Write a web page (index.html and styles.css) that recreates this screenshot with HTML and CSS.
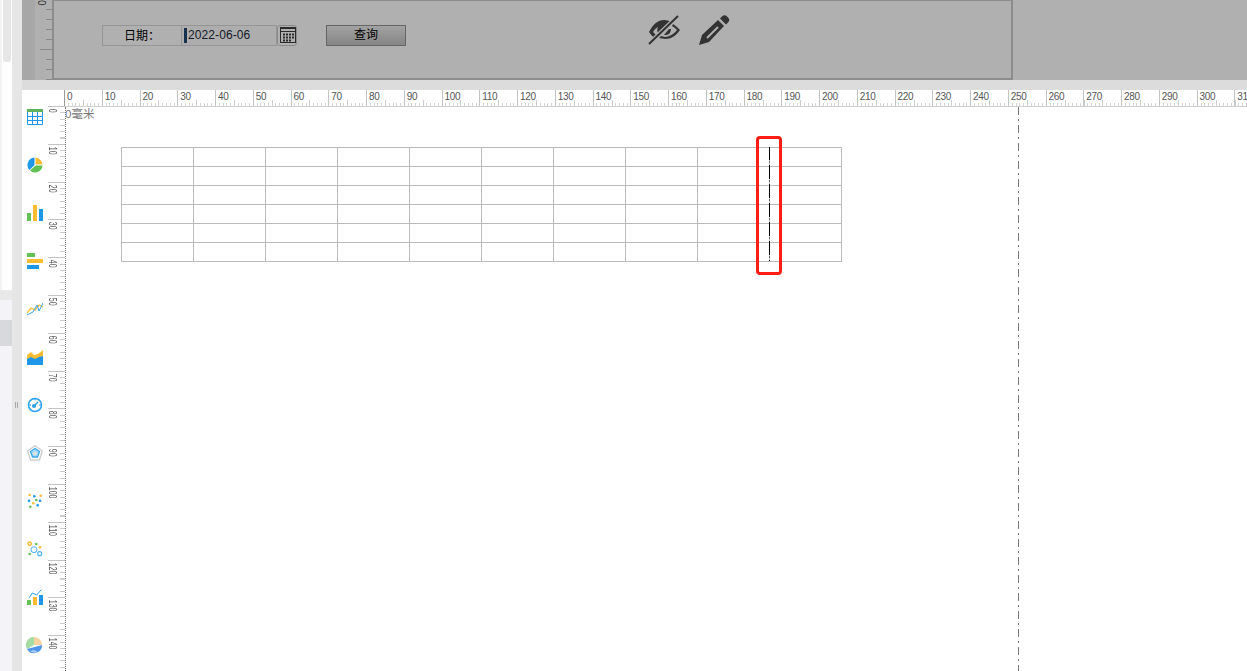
FILE: index.html
```html
<!DOCTYPE html>
<html lang="zh-CN">
<head>
    <meta charset="UTF-8">
    <title>报表设计器</title>
    <link rel="stylesheet" href="styles.css">
</head>
<body>
    <div class="app">
        <div class="nav">
            <div class="nav-top"><div class="nav-thumb"></div></div>
            <div class="nav-rule"></div>
            <div class="nav-item"></div>
            <div class="nav-item active"></div>
            <div class="nav-rest"></div>
        </div>
        <div class="splitter"><div class="grip"></div></div>

        <div class="work">
            <!-- 预览区（蒙层状态） -->
            <div class="preview">
                <div class="preview-gutter"></div>
                <div class="preview-ruler"><span>0</span></div>
                <div class="preview-canvas">
                    <div class="field-label">日期：</div>
                    <div class="field-input"><i class="caret"></i>2022-06-06</div>
                    <div class="field-cal">
                        <svg width="16" height="16" viewBox="0 0 16 16">
                            <rect x="0.5" y="0.5" width="15" height="15" fill="#b0b0b0" stroke="#2b2b2b"/>
                            <rect x="0" y="0" width="16" height="2" fill="#2b2b2b"/>
                            <rect x="0" y="4" width="16" height="1" fill="#2b2b2b"/>
                            <path d="M3 6.500h2v2H3zM6 6.500h2v2H6zM9 6.500h2v2H9zM12 6.500h2v2h-2zM3 9.500h2v2H3zM6 9.500h2v2H6zM9 9.500h2v2H9zM12 9.500h2v2h-2zM3 12.500h2v2H3zM6 12.500h2v2H6zM9 12.500h2v2H9z" fill="#2b2b2b"/>
                        </svg>
                    </div>
                    <div class="query-btn">查询</div>
                    <svg class="icon-eye" width="32" height="30" viewBox="0 0 32 30">
                        <path d="M1 17C5 9 10 5 16 5c3 0 6 1 8 2L8 24C5 22 3 20 1 17z" fill="#333"/>
                        <path d="M5 17c1-2 3-4 5-5-1 2-1 4 0 6l-2 2c-1-1-2-2-3-3z" fill="#b0b0b0"/>
                        <path d="M25 9c3 2 5 4 7 6-4 6-9 9-15 9-2 0-4-1-6-1l2-2c1 0 3 1 4 1 4 0 9-3 12-7-1-1-3-3-5-4z" fill="#333"/>
                        <path d="M18 20c3 0 5-3 5-6l-2 0-5 6z" fill="#333"/>
                        <path d="M1 29L30 1" stroke="#b0b0b0" stroke-width="4.5"/>
                        <path d="M1 29L30 1" stroke="#333" stroke-width="2"/>
                    </svg>
                    <svg class="icon-pencil" width="32" height="30" viewBox="0 0 32 30">
                        <path d="M0 30l3-10L19 5l6 6L10 27z" fill="#333"/>
                        <path d="M21 3.500L23 1.500a3.500 3.500 0 0 1 5 0l1 1a3.500 3.500 0 0 1 0 5L27 9.500z" fill="#333"/>
                        <path d="M8 23L19 12" stroke="#b0b0b0" stroke-width="2"/>
                    </svg>
                </div>
            </div>
            <div class="band"></div>

            <!-- 设计区 -->
            <div class="designer">
                <div class="palette">
                    <div class="tool">
                        <svg width="16" height="16" viewBox="0 0 16 16">
                            <rect width="16" height="3" fill="#5fb35b"/>
                            <path d="M.5 3v12.500h15V3M5.500 3v12.500M10.500 3v12.500M0 7.500h16M0 11.500h16" fill="none" stroke="#1f97e6"/>
                        </svg>
                    </div>
                    <div class="tool">
                        <svg width="16" height="16" viewBox="0 0 16 16">
                            <path d="M8.500 .5a7.500 7.500 0 0 1 7 7H8.500z" fill="#fbbc34"/>
                            <path d="M15.500 8.500a7.500 7.500 0 0 1-12.500 5L8.500 8.500z" fill="#62c254"/>
                            <path d="M7.500 .5v7.500l-5 5a7.500 7.500 0 0 1 5-12.500z" fill="#1f97e6"/>
                        </svg>
                    </div>
                    <div class="tool">
                        <svg width="16" height="16" viewBox="0 0 16 16">
                            <rect x="0" y="8" width="4" height="8" fill="#62c254"/>
                            <rect x="6" y="0" width="4" height="16" fill="#fbbc34"/>
                            <rect x="12" y="4" width="4" height="12" fill="#1f97e6"/>
                        </svg>
                    </div>
                    <div class="tool">
                        <svg width="16" height="16" viewBox="0 0 16 16">
                            <rect x="0" y="0" width="8" height="4" fill="#62c254"/>
                            <rect x="0" y="6" width="16" height="4" fill="#fbbc34"/>
                            <rect x="0" y="12" width="12" height="4" fill="#1f97e6"/>
                        </svg>
                    </div>
                    <div class="tool">
                        <svg width="16" height="16" viewBox="0 0 16 16" fill="none">
                            <path d="M0 12L4 7l4 2 4-5 4 2" stroke="#fbbc34" stroke-width="1.300"/>
                            <path d="M0 14l6-3 4-7 2 6 4-8" stroke="#3aa4ec"/>
                        </svg>
                    </div>
                    <div class="tool">
                        <svg width="16" height="16" viewBox="0 0 16 16">
                            <path d="M0 6l4-3 3 3 4-1 5-4v15H0z" fill="#fbbc34"/>
                            <path d="M0 10l4-2 4 2 4-2 4-1v9H0z" fill="#1f97e6"/>
                        </svg>
                    </div>
                    <div class="tool">
                        <svg width="16" height="16" viewBox="0 0 16 16" fill="none">
                            <circle cx="8" cy="8" r="6.500" stroke="#2a9fec" stroke-width="1.500"/>
                            <path d="M8 1.500v2M2 8h2M12 8h2" stroke="#2a9fec"/>
                            <circle cx="7" cy="9" r="2" fill="#2a9fec"/>
                            <path d="M7 9l4-4" stroke="#2a9fec" stroke-width="1.500"/>
                        </svg>
                    </div>
                    <div class="tool">
                        <svg width="16" height="16" viewBox="0 0 16 16" fill="none">
                            <path d="M8 .7l7.300 5.300-2.800 9h-9L.7 6z" stroke="#cfcfcf" stroke-width="1.400"/>
                            <path d="M8 3.500l4.500 3-2 5.500h-5l-2-5.500z" fill="#a9dcf8" stroke="#3ba8ec" stroke-width="1.300"/>
                            <path d="M8 6.500l2 1.500-1 2H7L6 8z" fill="#e4e4e4"/>
                        </svg>
                    </div>
                    <div class="tool">
                        <svg width="16" height="16" viewBox="0 0 16 16">
                            <circle cx="2.700" cy="2" r="1.300" fill="#fbbc34"/>
                            <circle cx="7.300" cy="3.300" r="1.300" fill="#1f97e6"/>
                            <circle cx="13.700" cy="2.700" r="1.300" fill="#fbbc34"/>
                            <circle cx="2" cy="7.700" r="1.300" fill="#1f97e6"/>
                            <circle cx="9.300" cy="7" r="1.300" fill="#62c254"/>
                            <circle cx="13" cy="7.700" r="1.300" fill="#1f97e6"/>
                            <circle cx="6.300" cy="10.300" r="1.300" fill="#fbbc34"/>
                            <circle cx="3.300" cy="13.700" r="1.300" fill="#62c254"/>
                            <circle cx="10.700" cy="12.300" r="1.300" fill="#1f97e6"/>
                        </svg>
                    </div>
                    <div class="tool">
                        <svg width="16" height="16" viewBox="0 0 16 16" fill="none">
                            <circle cx="2.700" cy="2.700" r="1.700" stroke="#fbbc34" stroke-width="1.500"/>
                            <circle cx="9.300" cy="3" r="1.300" fill="#62c254"/>
                            <circle cx="13" cy="6.300" r="1.300" fill="#fbbc34"/>
                            <circle cx="7" cy="8.700" r="3" stroke="#4db1ee"/>
                            <circle cx="12.700" cy="12.700" r="2" stroke="#4db1ee" stroke-width="1.200"/>
                            <circle cx="2.700" cy="13" r="1.300" fill="#62c254"/>
                        </svg>
                    </div>
                    <div class="tool">
                        <svg width="16" height="16" viewBox="0 0 16 16">
                            <rect x="0" y="11" width="4" height="5" fill="#62c254"/>
                            <rect x="6" y="8" width="4" height="8" fill="#fbbc34"/>
                            <rect x="12" y="6" width="4" height="10" fill="#1f97e6"/>
                            <path d="M2.300 8.700L5.300 4l4.400 2 4.600-5.300" fill="none" stroke="#2a9fec"/>
                        </svg>
                    </div>
                    <div class="tool">
                        <svg class="soft-pie" width="18" height="18" viewBox="0 0 18 18">
                            <path d="M9 9V1a8 8 0 0 1 8 8z" fill="#f8d3a0"/>
                            <path d="M9 9V1a8 8 0 0 0-7 12z" fill="#a5dca5"/>
                            <path d="M17 9a8 8 0 0 1-15 4z" fill="#4d94ea"/>
                            <path d="M5 15a8 8 0 0 0 8 1l-4-2z" fill="#a9cdf5"/>
                        </svg>
                    </div>
                </div>

                <div class="vruler">
                    <span>0</span><span>10</span><span>20</span><span>30</span><span>40</span>
                    <span>50</span><span>60</span><span>70</span><span>80</span><span>90</span>
                    <span>100</span><span>110</span><span>120</span><span>130</span><span>140</span>
                </div>

                <div class="board">
                    <div class="hruler">
                        <span>0</span><span>10</span><span>20</span><span>30</span><span>40</span><span>50</span><span>60</span><span>70</span>
                        <span>80</span><span>90</span><span>100</span><span>110</span><span>120</span><span>130</span><span>140</span><span>150</span>
                        <span>160</span><span>170</span><span>180</span><span>190</span><span>200</span><span>210</span><span>220</span><span>230</span>
                        <span>240</span><span>250</span><span>260</span><span>270</span><span>280</span><span>290</span><span>300</span><span>310</span>
                    </div>
                    <div class="page">
                        <div class="unit">0毫米</div>
                        <div class="sheet">
                            <div></div><div></div><div></div><div></div><div></div><div></div><div></div><div></div><div></div><div></div>
                            <div></div><div></div><div></div><div></div><div></div><div></div><div></div><div></div><div></div><div></div>
                            <div></div><div></div><div></div><div></div><div></div><div></div><div></div><div></div><div></div><div></div>
                            <div></div><div></div><div></div><div></div><div></div><div></div><div></div><div></div><div></div><div></div>
                            <div></div><div></div><div></div><div></div><div></div><div></div><div></div><div></div><div></div><div></div>
                            <div></div><div></div><div></div><div></div><div></div><div></div><div></div><div></div><div></div><div></div>
                        </div>
                        <div class="page-break"></div>
                        <div class="col-break"></div>
                        <div class="mark"></div>
                    </div>
                </div>
            </div>
        </div>
    </div>
</body>
</html>
```

FILE: styles.css
```css
html, body {
    margin: 0;
    height: 100%;
    overflow: hidden;
}
body {
    font-family: 'Liberation Sans', 'Noto Sans CJK SC', sans-serif;
    font-size: 12px;
    color: #222;
    background-color: #fff;
}
.app {
    display: flex;
    height: 671px;
}

/* 左侧导航 */
.nav {
    width: 12px;
    flex: none;
    display: flex;
    flex-direction: column;
}
.nav-top {
    height: 290px;
    box-sizing: border-box;
    border-left: 2px solid #f3f3f3;
    padding-left: 1px;
    background-color: #fff;
}
.nav-thumb {
    width: 8px;
    height: 62px;
    background-color: #e6e6e6;
    border-radius: 0 0 3px 3px;
}
.nav-rule {
    height: 10px;
    background-color: #e9e9e9;
}
.nav-item {
    height: 20px;
    background-color: #f4f4f8;
}
.nav-item.active {
    height: 26px;
    background-color: #d8d9dc;
}
.nav-rest {
    flex: 1;
    background-color: #f4f4f8;
}
.splitter {
    width: 10px;
    flex: none;
    box-sizing: border-box;
    padding: 402px 0 0 3px;
    background-color: #e6e6e6;
}
.grip {
    width: 1px;
    height: 6px;
    border-left: 1px solid #aaa;
    border-right: 1px solid #aaa;
}

.work {
    flex: 1;
    min-width: 0;
    display: flex;
    flex-direction: column;
}

/* 预览区 */
.preview {
    height: 80px;
    flex: none;
    display: flex;
    overflow: hidden;
    background-color: #b0b0b0;
}
.preview-gutter {
    width: 13px;
    flex: none;
    background-color: #a7a7a7;
}
.preview-ruler {
    width: 17px;
    flex: none;
    position: relative;
    background:
        linear-gradient(#888, #888) 5px 49px / 12px 1px no-repeat,
        repeating-linear-gradient(#888 0 1px, transparent 1px 10px) 11px 9px / 6px 100% no-repeat,
        #b0b0b0;
}
.preview-ruler span {
    position: absolute;
    left: 0;
    top: 0;
    font-size: 10px;
    line-height: 12px;
    color: #333;
    writing-mode: vertical-rl;
}
.preview-canvas {
    width: 961px;
    height: 81px;
    margin-top: -1px;
    flex: none;
    box-sizing: border-box;
    border: 2px solid #8c8c8c;
    padding: 24px 0 0 48px;
    display: flex;
    align-items: flex-start;
}
.field-label, .field-input, .field-cal, .query-btn {
    height: 21px;
    box-sizing: border-box;
    line-height: 19px;
}
.field-label {
    width: 80px;
    border: 1px solid #969696;
    text-align: center;
    color: #000;
    line-height: 20px;
}
.field-input {
    width: 95px;
    border: 1px solid #969696;
    border-left: 0;
    background-color: #adadad;
    padding-left: 2px;
    display: flex;
    align-items: center;
    color: #141a28;
    letter-spacing: 0.1px;
}
.caret {
    width: 3px;
    height: 15px;
    margin-right: 1px;
    background-color: #17324f;
}
.field-cal {
    width: 20px;
    border: 1px solid #8a8a8a;
    border-radius: 3px;
    padding: 1px 0 0 2px;
}
.field-cal svg {
    display: block;
}
.query-btn {
    width: 80px;
    margin-left: 29px;
    border: 1px solid #666;
    background: linear-gradient(#a2a2a2, #858585);
    text-align: center;
    color: #000;
}
.icon-eye {
    margin: -10px 0 0 242px;
}
.icon-pencil {
    margin: -10px 0 0 19px;
}
.band {
    height: 10px;
    flex: none;
    background-color: #dcdcdc;
}

/* 设计区 */
.designer {
    flex: 1;
    min-height: 0;
    display: flex;
}
.palette {
    width: 26px;
    flex: none;
    box-sizing: border-box;
    padding: 3px 0 0 5px;
    display: flex;
    flex-direction: column;
}
.tool {
    height: 48px;
    flex: none;
    display: flex;
    align-items: center;
}
.soft-pie {
    margin-left: -2px;
    filter: blur(0.5px);
}
.vruler {
    width: 17px;
    flex: none;
    box-sizing: border-box;
    padding-top: 16px;
    overflow: hidden;
    background:
        repeating-linear-gradient(#c4c4c4 0 1px, transparent 1px 37.800px) 0 16px / 100% 100% no-repeat,
        repeating-linear-gradient(#ccc 0 1px, transparent 1px 6.300px) 100% 16px / 5px 100% no-repeat;
}
/* 竖向刻度文字是压扁显示的 */
.vruler span {
    display: block;
    height: 37.800px;
    box-sizing: border-box;
    padding: 4px 7px 0 0;
    font-size: 10px;
    line-height: 9px;
    color: #555;
    writing-mode: vertical-rl;
    transform: scaleY(0.7);
    transform-origin: top;
}
.vruler span + span {
    margin-top: 0;
}
.board {
    flex: 1;
    min-width: 0;
    display: flex;
    flex-direction: column;
}
.hruler {
    height: 17px;
    flex: none;
    margin-left: -1px;
    box-sizing: border-box;
    border-bottom: 1px solid #d0d0d0;
    display: flex;
    overflow: hidden;
    background:
        repeating-linear-gradient(90deg, #ccc 0 1px, transparent 1px 18.880px) 0 100% / 100% 6px no-repeat,
        repeating-linear-gradient(90deg, #d4d4d4 0 1px, transparent 1px 3.776px) 0 100% / 100% 3px no-repeat;
}
.hruler span {
    width: 37.760px;
    flex: none;
    box-sizing: border-box;
    border-left: 1px solid #c4c4c4;
    padding: 1px 0 0 2px;
    font-size: 10px;
    line-height: 12px;
    letter-spacing: -0.3px;
    color: #555;
}
.hruler span:first-child {
    border-left-color: #999;
}

/* 纸张 */
.page {
    flex: 1;
    min-height: 0;
    position: relative;
    overflow: hidden;
    border-left: 1px dotted #777;
    padding: 40px 0 0 55px;
}
.unit {
    position: absolute;
    left: -1px;
    top: 0;
    font-size: 11.500px;
    line-height: 15px;
    color: #777;
}
.sheet {
    width: 720px;
    display: grid;
    grid-template-columns: repeat(10, 72px);
    grid-auto-rows: 19px;
    border-right: 1px solid #bbb;
    border-bottom: 1px solid #bbb;
}
.sheet div {
    border-left: 1px solid #bbb;
    border-top: 1px solid #bbb;
}
.page-break {
    position: absolute;
    left: 952px;
    top: 0;
    bottom: 0;
    width: 1px;
    background: repeating-linear-gradient(#777 0 8px, transparent 8px 12px, #777 12px 14px, transparent 14px 18px);
}
.col-break {
    position: absolute;
    left: 703px;
    top: 40px;
    width: 1px;
    height: 114px;
    background: repeating-linear-gradient(#000 0 13px, #bbb 13px 14px, #666 14px 16px, #bbb 16px 18px, #000 18px 19px);
}
.mark {
    position: absolute;
    left: 690px;
    top: 29px;
    width: 26px;
    height: 139px;
    box-sizing: border-box;
    border: 3px solid #fb1e14;
    border-radius: 4px;
}
```
